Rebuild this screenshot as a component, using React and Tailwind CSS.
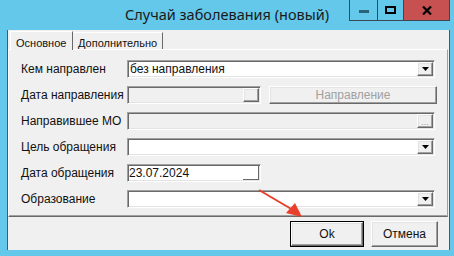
import React from "react";

const sunken = "border border-t-[#a0a0a0] border-l-[#a0a0a0] border-b-white border-r-white shadow-[inset_1px_1px_0_#696969,inset_-1px_-1px_0_#e3e3e3]";
const raised = "border border-t-white border-l-white border-b-[#696969] border-r-[#696969] shadow-[inset_-1px_-1px_0_#a0a0a0,inset_1px_1px_0_#e3e3e3]";

const DropButton = () => (
  <div className={`w-[16px] h-full bg-[#f0f0f0] flex items-center justify-center ${raised}`}>
    <svg width="7" height="4" viewBox="0 0 7 4">
      <polygon points="0,0 7,0 3.5,4" fill="#000" />
    </svg>
  </div>
);

const Row = ({ label, children }) => (
  <div className="flex items-center h-[18px]">
    <div className="w-[106px] text-[12px] text-[#111]">{label}</div>
    {children}
  </div>
);

const Combo = ({ value }) => (
  <div className={`w-[308px] h-[18px] bg-white flex items-stretch p-[1px] ${sunken}`}>
    <div className="flex-1 text-[12px] leading-[15px] pl-[1px] text-[#111]">{value}</div>
    <DropButton />
  </div>
);

const App = () => {
  return (
    <div className="w-[454px] h-[256px] bg-[#63c8ea] relative overflow-hidden font-['Liberation_Sans',Arial,sans-serif]">
      {/* title bar */}
      <div className="h-[30px] flex">
        <div className="pl-[125px] pt-[4px] text-[14.5px] text-[#1a1a1a] font-['Noto_Sans',sans-serif] leading-[20px]">
          Случай заболевания (новый)
        </div>
        <div className="ml-auto mr-[4px] h-[21px] flex border border-[#3a4a50] border-t-0">
          <div className="w-[28px] flex items-center justify-center border-r border-[#3a4a50]">
            <div className="w-[10px] h-[3px] bg-[#2a6478] mt-[2px]" />
          </div>
          <div className="w-[26px] flex items-center justify-center border-r border-[#3a4a50]">
            <div className="w-[11px] h-[8px] border-2 border-black" />
          </div>
          <div className="w-[45px] bg-[#c75050] flex items-center justify-center">
            <svg width="10" height="9" viewBox="0 0 10 9">
              <path d="M1 0.5 L9 8.5 M9 0.5 L1 8.5" stroke="#000" strokeWidth="2.2" />
            </svg>
          </div>
        </div>
      </div>

      {/* client area */}
      <div className="ml-[7px] w-[443px] h-[220px] bg-[#f0f0f0] border-l border-r border-[#4c5a60]">
        {/* tabs */}
        <div className="h-[19px] flex items-end pl-[2px]">
          <div className="w-[63px] h-[19px] bg-[#f0f0f0] border-t border-l border-white border-r border-r-[#696969] relative z-10 mb-[-1px] text-[11px] text-[#111] pl-[5px] pt-[3px]">
            Основное
          </div>
          <div className="w-[90px] h-[17px] bg-[#f0f0f0] border-t border-white border-r border-r-[#696969] text-[11px] text-[#111] pl-[5px] pt-[2px]">
            Дополнительно
          </div>
        </div>

        {/* tab panel */}
        <div className="w-[440px] h-[168px] border-t border-l border-white border-b border-r border-b-[#696969] border-r-[#a0a0a0] shadow-[inset_0_-1px_0_#a0a0a0] pl-[12px] pt-[10px] flex flex-col gap-[8px]">
          <Row label="Кем направлен">
            <Combo value="без направления" />
          </Row>
          <Row label="Дата направления">
            <div className={`w-[134px] h-[18px] bg-[#f0f0f0] flex justify-end p-[1px] ${sunken}`}>
              <div className={`w-[16px] h-full ${raised}`} />
            </div>
            <div className={`ml-[8px] w-[168px] h-[18px] flex items-center justify-center text-[12px] text-[#a0a0a0] ${raised}`}>
              Направление
            </div>
          </Row>
          <Row label="Направившее МО">
            <div className={`w-[308px] h-[18px] bg-[#f0f0f0] flex justify-end p-[1px] ${sunken}`}>
              <div className={`w-[16px] h-full flex items-end justify-center pb-[2px] ${raised}`}>
                <span className="text-[9px] leading-[6px] text-[#a0a0a0]">...</span>
              </div>
            </div>
          </Row>
          <Row label="Цель обращения">
            <Combo value="" />
          </Row>
          <Row label="Дата обращения">
            <div className={`w-[134px] h-[18px] bg-white flex p-[1px] ${sunken}`}>
              <div className="flex-1 text-[12px] leading-[15px] text-[#111]">23.07.2024</div>
              <div className="w-[16px] h-full border-r border-b border-[#696969]" />
            </div>
          </Row>
          <Row label="Образование">
            <Combo value="" />
          </Row>
        </div>

        {/* buttons */}
        <div className="flex justify-end gap-[7px] pr-[11px] mt-[4px]">
          <div className="w-[74px] h-[26px] border border-black">
            <div className={`w-full h-full flex items-center justify-center text-[12px] text-[#111] ${raised}`}>
              Ok
            </div>
          </div>
          <div className={`w-[67px] h-[26px] flex items-center justify-center text-[12px] text-[#111] ${raised}`}>
            Отмена
          </div>
        </div>
      </div>

      {/* red arrow annotation */}
      <svg className="absolute left-0 top-0 pointer-events-none" width="454" height="256" viewBox="0 0 454 256">
        <line x1="259" y1="190" x2="293" y2="210" stroke="#e8402a" strokeWidth="2" />
        <polygon points="302,217 286,213 295,203" fill="#e8402a" />
      </svg>
    </div>
  );
};

export default App;
